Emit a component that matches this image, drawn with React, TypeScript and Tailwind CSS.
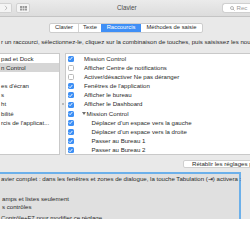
import React from "react";

const leftItems = [
  { label: "pad et Dock" },
  { label: "n Control", selected: true },
  { label: "" },
  { label: "es d'écran" },
  { label: "s" },
  { label: "ht" },
  { label: "bilité" },
  { label: "rcis de l'applicat..." },
];

const rightItems = [
  { label: "Mission Control", on: true, level: 0 },
  { label: "Afficher Centre de notifications", on: false, level: 0 },
  { label: "Activer/désactiver Ne pas déranger", on: false, level: 0 },
  { label: "Fenêtres de l'application", on: true, level: 0 },
  { label: "Afficher le bureau", on: true, level: 0 },
  { label: "Afficher le Dashboard", on: true, level: 0 },
  { label: "Mission Control", on: true, level: 0, group: true },
  { label: "Déplacer d'un espace vers la gauche", on: true, level: 1 },
  { label: "Déplacer d'un espace vers la droite", on: true, level: 1 },
  { label: "Passer au Bureau 1", on: true, level: 1 },
  { label: "Passer au Bureau 2", on: true, level: 1 },
];

function Checkbox({ on }: { on: boolean }) {
  if (!on) {
    return <span className="block w-[6px] h-[6px] rounded-[1.5px] bg-white border border-[#b9b9b9]" />;
  }
  return (
    <span className="flex items-center justify-center w-[6px] h-[6px] rounded-[1.5px] bg-[#3d8ff5]">
      <svg width="5" height="5" viewBox="0 0 10 10">
        <path d="M2 5.2 L4.2 7.4 L8.2 2.6" fill="none" stroke="white" strokeWidth="1.8" strokeLinecap="round" strokeLinejoin="round" />
      </svg>
    </span>
  );
}

export default function App() {
  return (
    <div className="w-[250px] h-[250px] bg-white overflow-hidden font-['Liberation_Sans',Arial,sans-serif] text-[6.1px] leading-none text-[#2a2a2a]">
      <div className="h-[219px] bg-[#e9e9e9] flex flex-col overflow-hidden">
        {/* toolbar */}
        <div className="h-[17px] shrink-0 bg-gradient-to-b from-[#ebebeb] to-[#dcdcdc] border-b border-[#c4c4c4] flex items-center relative">
          <div className="flex items-center gap-[4px]">
            <div className="w-[12px] h-[10px] rounded-r-[2px] bg-[#f4f4f4] border border-[#d2d2d2] border-l-0 flex items-center justify-center">
              <svg width="4" height="6" viewBox="0 0 4 6">
                <path d="M1 0.8 L3 3 L1 5.2" fill="none" stroke="#b8b8b8" strokeWidth="0.9" />
              </svg>
            </div>
            <div className="w-[14px] h-[10px] rounded-[2px] bg-[#f4f4f4] border border-[#d2d2d2] flex items-center justify-center">
              <svg width="7" height="5" viewBox="0 0 7 5">
                {[0, 2.5, 5].map((x) =>
                  [0, 2.5].map((y) => <rect key={`${x}-${y}`} x={x} y={y} width="2" height="2" fill="#9a9a9a" />)
                )}
              </svg>
            </div>
          </div>
          <span className="ml-[87px] text-[#4a4a4a] text-[6.3px]">Clavier</span>
          <div className="ml-auto w-[28px] h-[10px] rounded-l-[3px] bg-white border border-[#d0d0d0] border-r-0 flex items-center pl-[7px] gap-[1.5px] text-[#9a9a9a]">
            <svg width="5" height="5" viewBox="0 0 10 10">
              <circle cx="4" cy="4" r="3" fill="none" stroke="#9a9a9a" strokeWidth="1.4" />
              <path d="M6.2 6.2 L9 9" stroke="#9a9a9a" strokeWidth="1.6" />
            </svg>
            <span>Rec</span>
          </div>
        </div>

        {/* tabs */}
        <div className="pl-[49px] pt-[6px] shrink-0">
          <div className="flex h-[10px] w-max rounded-[2px] border border-[#cdcdcd] bg-white overflow-hidden text-[5.8px]">
            <div className="w-[29px] flex items-center justify-center border-r border-[#d4d4d4]">Clavier</div>
            <div className="w-[22px] flex items-center justify-center">Texte</div>
            <div className="w-[40px] flex items-center justify-center bg-[#3f8ff6] text-white">Raccourcis</div>
            <div className="w-[61px] flex items-center justify-center">Méthodes de saisie</div>
          </div>
        </div>

        {/* instructions */}
        <div className="pt-[6px] h-[20px] shrink-0 whitespace-nowrap pl-[1px]">
          r un raccourci, sélectionnez-le, cliquez sur la combinaison de touches, puis saisissez les nouveaux raccourcis.
        </div>

        {/* lists */}
        <div className="flex shrink-0 h-[102px]">
          <div className="w-[60px] shrink-0 bg-white border-y border-r border-[#c9c9c9]">
            {leftItems.map((it, i) => (
              <div
                key={i}
                className={`h-[9.2px] flex items-center whitespace-nowrap pl-[1px] ${it.selected ? "bg-[#d6d6d6]" : ""}`}
              >
                {it.label}
              </div>
            ))}
          </div>
          <div className="w-[5px] shrink-0 flex items-center justify-center">
            <span className="block w-[2px] h-[2px] rounded-full bg-[#a8a8a8]" />
          </div>
          <div className="flex-1 bg-white border-y border-l border-[#c9c9c9] overflow-hidden">
            {rightItems.map((it, i) => (
              <div key={i} className="h-[9.2px] flex items-center whitespace-nowrap pl-[1.5px]">
                <Checkbox on={it.on} />
                {it.group ? (
                  <span className="flex items-center ml-[8px]">
                    <svg width="4" height="3" viewBox="0 0 4 3" className="mr-[1px]">
                      <path d="M0 0 L4 0 L2 3 Z" fill="#6f6f6f" />
                    </svg>
                    {it.label}
                  </span>
                ) : (
                  <span className={it.level ? "ml-[18px]" : "ml-[10.5px]"}>{it.label}</span>
                )}
              </div>
            ))}
          </div>
        </div>

        {/* restore button */}
        <div className="pt-[5px] h-[17px] shrink-0 pl-[183px] whitespace-nowrap">
          <div className="h-[8px] w-max rounded-[2px] bg-white border border-[#cfcfcf] flex items-center pl-[8px] pr-[8px]">
            Rétablir les réglages par défaut
          </div>
        </div>

        {/* full keyboard access */}
        <div className="flex-1 w-[241px] border-t-2 border-r-2 border-[#6cb0ea] bg-[#e0e0e0] whitespace-nowrap">
          <div className="pt-[2px] pl-[1px]">
            avier complet : dans les fenêtres et zones de dialogue, la touche Tabulation (⇥) activera :
          </div>
          <div className="pt-[14px] pl-[2px]">amps et listes seulement</div>
          <div className="pt-[2px] pl-[2px]">s contrôles</div>
          <div className="pt-[5px] pl-[1px]">Contrôle+F7 pour modifier ce réglage.</div>
        </div>
      </div>
    </div>
  );
}
